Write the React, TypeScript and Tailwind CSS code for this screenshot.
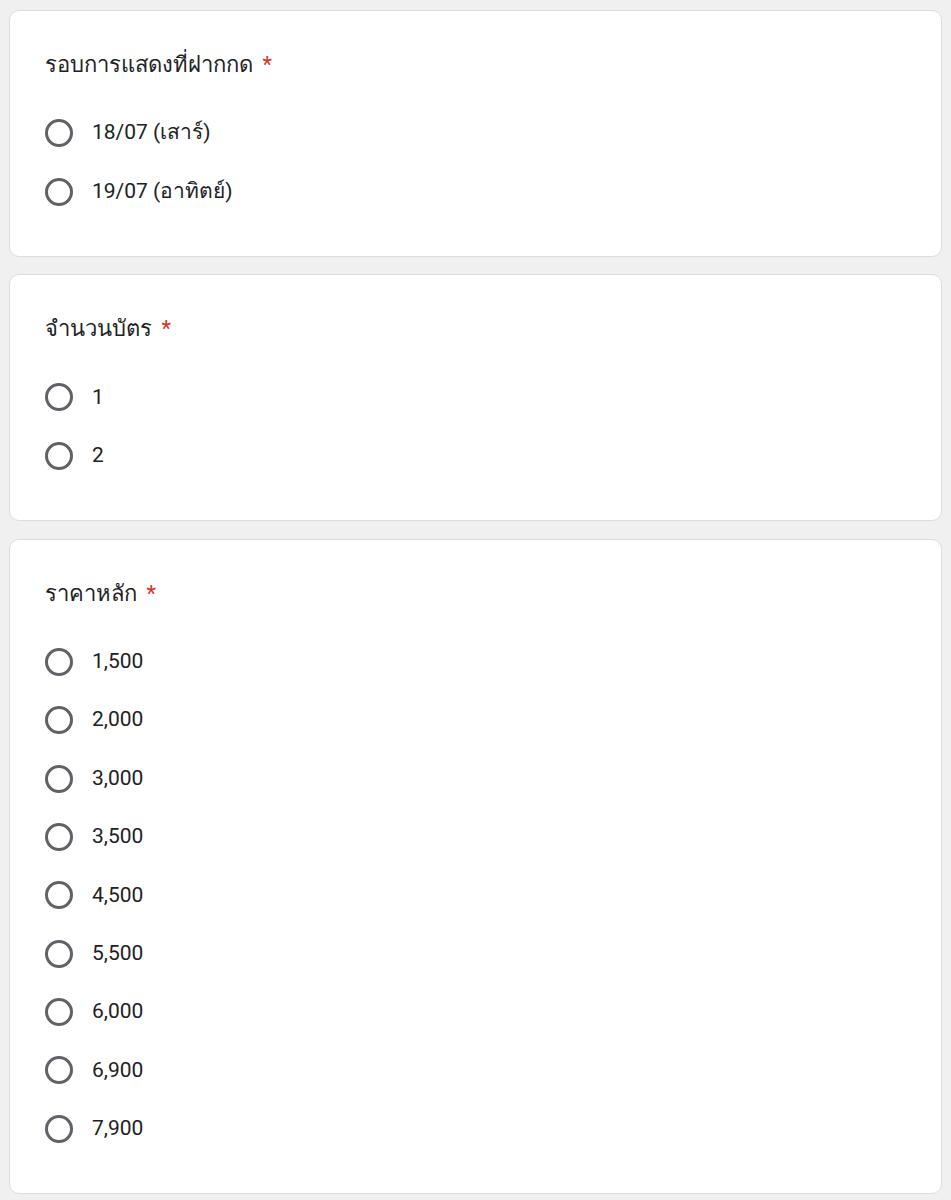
import React from 'react'

type Question = {
  title: string
  options: string[]
}

const questions: Question[] = [
  { title: 'รอบการแสดงที่ฝากกด', options: ['18/07 (เสาร์)', '19/07 (อาทิตย์)'] },
  { title: 'จำนวนบัตร', options: ['1', '2'] },
  {
    title: 'ราคาหลัก',
    options: ['1,500', '2,000', '3,000', '3,500', '4,500', '5,500', '6,000', '6,900', '7,900'],
  },
]

function Radio() {
  return <span className="block w-[28px] h-[28px] rounded-full border-[3px] border-[#5f6368] shrink-0" />
}

function QuestionCard({ q }: { q: Question }) {
  return (
    <div className="bg-white rounded-[10px] border border-[#dadce0] pt-[39px] pb-[35px] pl-[35px] pr-6">
      <h2 className="text-[22px] leading-[30px] text-[#202124]">
        {q.title} <span className="ml-[4px] text-[#d93025]">*</span>
      </h2>
      <ul className="mt-[24px]">
        {q.options.map(opt => (
          <li key={opt} className="flex items-center h-[58.4px] gap-[19px]">
            <Radio />
            <span className="text-[21px] text-[#202124]">{opt}</span>
          </li>
        ))}
      </ul>
    </div>
  )
}

export default function App() {
  return (
    <div
      className="min-h-[1200px] bg-[#f0f0f0] px-[9px] pt-[10px] flex flex-col gap-[17.5px]"
      style={{ fontFamily: 'Roboto, "Noto Sans", sans-serif' }}
    >
      {questions.map(q => (
        <QuestionCard key={q.title} q={q} />
      ))}
    </div>
  )
}
